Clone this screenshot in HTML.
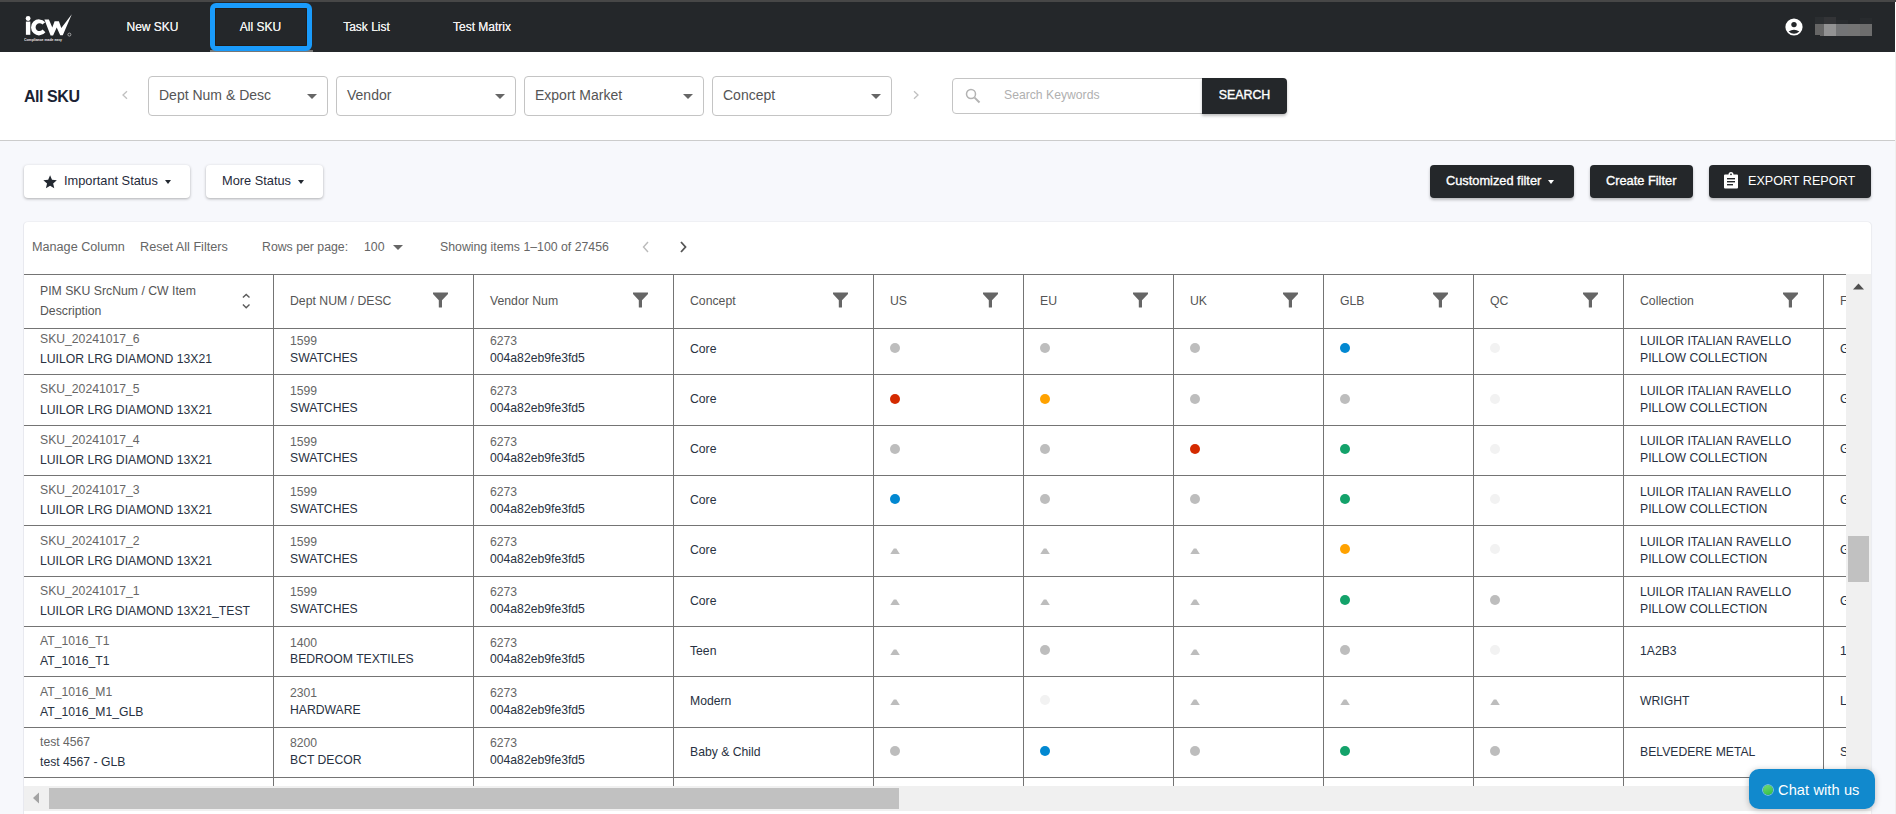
<!DOCTYPE html>
<html><head><meta charset="utf-8">
<style>
*{box-sizing:border-box;margin:0;padding:0}
html,body{width:1896px;height:814px;overflow:hidden;background:#f7f8fc;font-family:"Liberation Sans", sans-serif;}
.a{position:absolute;white-space:nowrap}
.t{position:absolute;white-space:nowrap;line-height:1}
.btnd{position:absolute;background:#24272a;border-radius:4px;box-shadow:0 2px 3px rgba(0,0,0,.25);color:#fff}
.btnw{position:absolute;background:#fff;border-radius:4px;box-shadow:0 1px 3px rgba(0,0,0,.3)}
.dd{position:absolute;top:76px;width:180px;height:40px;border:1px solid #c4c4c4;border-radius:4px;background:#fff}
.dd span{position:absolute;left:10px;top:11.2px;font-size:14px;color:#555;line-height:1}
.caret{position:absolute;width:0;height:0;border-left:5px solid transparent;border-right:5px solid transparent;border-top:5px solid #666}
.hl{position:absolute;height:1px;background:#747474}
.vl{position:absolute;width:1px;background:#747474}
.th{position:absolute;font-size:12.25px;color:#555;line-height:1}
.c1{position:absolute;font-size:12.2px;color:#666;line-height:1}
.c2{position:absolute;font-size:12.2px;color:#283141;line-height:1}
.dot{position:absolute;width:10px;height:10px;border-radius:50%}
</style></head><body>

<div class="a" style="left:0;top:0;width:1896px;height:2px;background:#474747"></div>
<div class="a" style="left:0;top:2px;width:1895px;height:50px;background:#24272a"></div>
<div class="a" style="left:1895px;top:2px;width:1px;height:50px;background:#fff"></div>
<svg class="a" style="left:0;top:0" width="80" height="50" viewBox="0 0 80 50">
<circle cx="28.1" cy="18.5" r="2.4" fill="#fff"/>
<rect x="25.9" y="21.6" width="4.4" height="13.2" fill="#fff"/>
<path d="M45.2 22.3 A8 8 0 1 0 45.4 32.2 L42.6 29.6 A3.9 3.9 0 1 1 42.4 24.6 Z" fill="#fff"/>
<path d="M44.4 19.5 L48.9 19.5 L52.3 27.5 L54.6 21.2 L58.9 21.2 L61.3 28 L71.8 14.2 L62.8 35.3 L60.2 35.3 L56.7 27.4 L53.1 35.6 L50.6 35.6 Z" fill="#fff"/>
<circle cx="69.4" cy="34.6" r="1.5" fill="none" stroke="#ccc" stroke-width=".7"/>
</svg>
<div class="t" style="left:24px;top:37.6px;font-size:4.1px;transform:scaleX(.84);transform-origin:0 0;color:#e6e6e6;font-weight:bold">Compliance made easy</div>
<div class="t" style="left:92.5px;width:120px;text-align:center;top:21px;font-size:12px;color:#eee;text-shadow:0 0 .3px #eee;">New SKU</div>
<div class="t" style="left:200.5px;width:120px;text-align:center;top:21px;font-size:12px;color:#eee;text-shadow:0 0 .3px #eee;">All SKU</div>
<div class="t" style="left:306.5px;width:120px;text-align:center;top:21px;font-size:12px;color:#eee;text-shadow:0 0 .3px #eee;">Task List</div>
<div class="t" style="left:422px;width:120px;text-align:center;top:21px;font-size:12px;color:#eee;text-shadow:0 0 .3px #eee;">Test Matrix</div>
<div class="a" style="left:210px;top:50px;width:103px;height:2px;background:#777"></div>
<div class="a" style="left:210px;top:3px;width:102px;height:48px;border:5px solid #1a9bfb;border-radius:6px"></div>
<div class="a" style="left:215px;top:8px;width:92px;height:38px;border:1px solid #201e1c;border-radius:1px"></div>
<svg class="a" style="left:1785.2px;top:17.8px" width="18" height="18" viewBox="0 0 18 18">
<circle cx="9" cy="9" r="8.6" fill="#fff"/>
<circle cx="9" cy="6.6" r="2.7" fill="#24272a"/>
<path d="M3.6 13.6 Q9 10 14.4 13.6 Q9 18 3.6 13.6Z" fill="#24272a"/>
</svg>
<div class="a" style="left:1815px;top:17px;width:9px;height:7px;background:#2b2e31"></div>
<div class="a" style="left:1824px;top:17px;width:12px;height:7px;background:#333437"></div>
<div class="a" style="left:1836px;top:20px;width:12px;height:4px;background:#282b2e"></div>
<div class="a" style="left:1860px;top:18px;width:12px;height:6px;background:#282b2e"></div>
<div class="a" style="left:1815px;top:24px;width:9px;height:11px;background:#666"></div>
<div class="a" style="left:1820px;top:35px;width:4px;height:1px;background:#666"></div>
<div class="a" style="left:1824px;top:24px;width:12px;height:12px;background:#929293"></div>
<div class="a" style="left:1836px;top:24px;width:12px;height:12px;background:#737476"></div>
<div class="a" style="left:1848px;top:24px;width:12px;height:12px;background:#747474"></div>
<div class="a" style="left:1860px;top:24px;width:12px;height:12px;background:#6d6d6d"></div>
<div class="a" style="left:0;top:52px;width:1896px;height:89px;background:#fff;border-bottom:1px solid #cccccc"></div>
<div class="t" style="left:24px;top:89px;font-size:16px;letter-spacing:-0.45px;font-weight:bold;color:#1a2233">All SKU</div>
<svg class="a" style="left:120px;top:89px" width="10" height="12" viewBox="0 0 10 12"><path d="M7 2.2 L3 6 L7 9.8" fill="none" stroke="#c0c0c0" stroke-width="1.3"/></svg>
<div class="dd" style="left:148px"><span>Dept Num &amp; Desc</span><div class="caret" style="left:158px;top:17px"></div></div>
<div class="dd" style="left:336px"><span>Vendor</span><div class="caret" style="left:158px;top:17px"></div></div>
<div class="dd" style="left:524px"><span>Export Market</span><div class="caret" style="left:158px;top:17px"></div></div>
<div class="dd" style="left:712px"><span>Concept</span><div class="caret" style="left:158px;top:17px"></div></div>
<svg class="a" style="left:911px;top:89px" width="10" height="12" viewBox="0 0 10 12"><path d="M3 2.2 L7 6 L3 9.8" fill="none" stroke="#c0c0c0" stroke-width="1.3"/></svg>
<div class="a" style="left:952px;top:78px;width:252px;height:36px;border:1px solid #c4c4c4;border-radius:4px 0 0 4px;background:#fff"></div>
<svg class="a" style="left:963px;top:86px" width="20" height="20" viewBox="0 0 20 20"><circle cx="8" cy="8" r="4.5" fill="none" stroke="#b3b3b3" stroke-width="1.5"/><path d="M11.6 11.6 L16.5 16.5" stroke="#b3b3b3" stroke-width="2"/></svg>
<div class="t" style="left:1004px;top:89px;font-size:12.2px;color:#b0b0b0">Search Keywords</div>
<div class="btnd" style="left:1202px;top:78px;width:85px;height:36px;border-radius:0 4px 4px 0"><div class="t" style="left:0;width:85px;text-align:center;top:10.6px;font-size:12.4px;-webkit-text-stroke:.35px #fff;color:#fff">SEARCH</div></div>
<div class="btnw" style="left:24px;top:165px;width:166px;height:33px"></div>
<svg class="a" style="left:42.2px;top:173.5px" width="16.2" height="16.2" viewBox="0 0 24 24"><path d="M12 17.27L18.18 21l-1.64-7.03L22 9.24l-7.19-.61L12 2 9.19 8.63 2 9.24l5.46 4.73L5.82 21z" fill="#222830"/></svg>
<div class="t" style="left:64px;top:175px;font-size:12.8px;color:#1f2a3a">Important Status</div>
<div class="caret" style="left:165px;top:180px;border-width:4px 3.5px 0 3.5px;border-top-color:#222830"></div>
<div class="btnw" style="left:206px;top:165px;width:117px;height:33px"></div>
<div class="t" style="left:222px;top:175px;font-size:12.8px;color:#1f2a3a">More Status</div>
<div class="caret" style="left:298px;top:180px;border-width:4px 3.5px 0 3.5px;border-top-color:#222830"></div>
<div class="btnd" style="left:1430px;top:165px;width:144px;height:33px"></div>
<div class="t" style="left:1446px;top:175px;font-size:12.8px;-webkit-text-stroke:.35px #fff;color:#fff">Customized filter</div>
<div class="caret" style="left:1548px;top:180px;border-width:4px 3.5px 0 3.5px;border-top-color:#fff"></div>
<div class="btnd" style="left:1590px;top:165px;width:103px;height:33px"></div>
<div class="t" style="left:1606px;top:175px;font-size:12.8px;-webkit-text-stroke:.35px #fff;color:#fff">Create Filter</div>
<div class="btnd" style="left:1709px;top:165px;width:162px;height:33px"></div>
<svg class="a" style="left:1723px;top:171px" width="16" height="18" viewBox="0 0 16 18"><path d="M2 3.5 H5.5 A2.5 2.5 0 0 1 10.5 3.5 H14 A1 1 0 0 1 15 4.5 V16.5 A1 1 0 0 1 14 17.5 H2 A1 1 0 0 1 1 16.5 V4.5 A1 1 0 0 1 2 3.5Z" fill="#fff"/><circle cx="8" cy="3.3" r="0.9" fill="#24272a"/><rect x="4" y="7" width="8" height="1.4" fill="#24272a"/><rect x="4" y="10" width="8" height="1.4" fill="#24272a"/><rect x="4" y="13" width="6" height="1.4" fill="#24272a"/></svg>
<div class="t" style="left:1748px;top:175px;font-size:12.6px;color:#fff">EXPORT REPORT</div>
<div class="a" style="left:24px;top:222px;width:1847px;height:600px;background:#fff;border-radius:4px;box-shadow:-1px 0 0 #e8e9ef, 0 -1px 1px rgba(0,0,0,.03), 1px 0 1px rgba(0,0,0,.05)"></div>
<div class="t" style="left:32px;top:241px;font-size:12.65px;color:#666">Manage Column</div>
<div class="t" style="left:140px;top:241px;font-size:12.65px;color:#666">Reset All Filters</div>
<div class="t" style="left:262px;top:241px;font-size:12.3px;color:#666">Rows per page:</div>
<div class="t" style="left:364px;top:241px;font-size:12.3px;color:#666">100</div>
<div class="caret" style="left:393px;top:245px;border-top-color:#666"></div>
<div class="t" style="left:440px;top:241px;font-size:12.3px;color:#666">Showing items 1–100 of 27456</div>
<svg class="a" style="left:641px;top:240px" width="10" height="14" viewBox="0 0 10 14"><path d="M7 2 L2.5 7 L7 12" fill="none" stroke="#bbb" stroke-width="1.4"/></svg>
<svg class="a" style="left:678px;top:240px" width="10" height="14" viewBox="0 0 10 14"><path d="M3 2 L7.5 7 L3 12" fill="none" stroke="#555" stroke-width="1.8"/></svg>
<div class="a" style="left:24px;top:274px;width:1822px;height:512px;overflow:hidden;background:#fff">
<div class="c1" style="left:16px;top:59.0px">SKU_20241017_6</div>
<div class="c2" style="left:16px;top:79.19999999999999px">LUILOR LRG DIAMOND 13X21</div>
<div class="c1" style="left:266px;top:61.10000000000002px">1599</div>
<div class="c2" style="left:266px;top:77.89999999999998px">SWATCHES</div>
<div class="c1" style="left:466px;top:61.10000000000002px">6273</div>
<div class="c2" style="left:466px;top:77.89999999999998px">004a82eb9fe3fd5</div>
<div class="c2" style="left:666px;top:68.69999999999999px">Core</div>
<div class="dot" style="left:866px;top:69px;background:#bdbdbd"></div>
<div class="dot" style="left:1016px;top:69px;background:#bdbdbd"></div>
<div class="dot" style="left:1166px;top:69px;background:#bdbdbd"></div>
<div class="dot" style="left:1316px;top:69px;background:#0288d1"></div>
<div class="dot" style="left:1466px;top:69px;background:#f2f2f2"></div>
<div class="c2" style="left:1616px;top:60.69999999999999px">LUILOR ITALIAN RAVELLO</div>
<div class="c2" style="left:1616px;top:77.69999999999999px">PILLOW COLLECTION</div>
<div class="c2" style="left:1816px;top:68.69999999999999px">G</div>
<div class="c1" style="left:16px;top:109.375px">SKU_20241017_5</div>
<div class="c2" style="left:16px;top:129.575px">LUILOR LRG DIAMOND 13X21</div>
<div class="c1" style="left:266px;top:111.34500000000003px">1599</div>
<div class="c2" style="left:266px;top:128.14499999999998px">SWATCHES</div>
<div class="c1" style="left:466px;top:111.34500000000003px">6273</div>
<div class="c2" style="left:466px;top:128.14499999999998px">004a82eb9fe3fd5</div>
<div class="c2" style="left:666px;top:119.07499999999999px">Core</div>
<div class="dot" style="left:866px;top:120px;background:#d42a00"></div>
<div class="dot" style="left:1016px;top:120px;background:#ffa200"></div>
<div class="dot" style="left:1166px;top:120px;background:#bdbdbd"></div>
<div class="dot" style="left:1316px;top:120px;background:#bdbdbd"></div>
<div class="dot" style="left:1466px;top:120px;background:#f2f2f2"></div>
<div class="c2" style="left:1616px;top:110.97499999999997px">LUILOR ITALIAN RAVELLO</div>
<div class="c2" style="left:1616px;top:127.97499999999997px">PILLOW COLLECTION</div>
<div class="c2" style="left:1816px;top:119.07499999999999px">G</div>
<div class="c1" style="left:16px;top:159.75px">SKU_20241017_4</div>
<div class="c2" style="left:16px;top:179.95px">LUILOR LRG DIAMOND 13X21</div>
<div class="c1" style="left:266px;top:161.59000000000003px">1599</div>
<div class="c2" style="left:266px;top:178.39px">SWATCHES</div>
<div class="c1" style="left:466px;top:161.59000000000003px">6273</div>
<div class="c2" style="left:466px;top:178.39px">004a82eb9fe3fd5</div>
<div class="c2" style="left:666px;top:169.45px">Core</div>
<div class="dot" style="left:866px;top:170px;background:#bdbdbd"></div>
<div class="dot" style="left:1016px;top:170px;background:#bdbdbd"></div>
<div class="dot" style="left:1166px;top:170px;background:#d42a00"></div>
<div class="dot" style="left:1316px;top:170px;background:#13a26a"></div>
<div class="dot" style="left:1466px;top:170px;background:#f2f2f2"></div>
<div class="c2" style="left:1616px;top:161.25px">LUILOR ITALIAN RAVELLO</div>
<div class="c2" style="left:1616px;top:178.25px">PILLOW COLLECTION</div>
<div class="c2" style="left:1816px;top:169.45px">G</div>
<div class="c1" style="left:16px;top:210.125px">SKU_20241017_3</div>
<div class="c2" style="left:16px;top:230.325px">LUILOR LRG DIAMOND 13X21</div>
<div class="c1" style="left:266px;top:211.83500000000004px">1599</div>
<div class="c2" style="left:266px;top:228.635px">SWATCHES</div>
<div class="c1" style="left:466px;top:211.83500000000004px">6273</div>
<div class="c2" style="left:466px;top:228.635px">004a82eb9fe3fd5</div>
<div class="c2" style="left:666px;top:219.825px">Core</div>
<div class="dot" style="left:866px;top:220px;background:#0288d1"></div>
<div class="dot" style="left:1016px;top:220px;background:#bdbdbd"></div>
<div class="dot" style="left:1166px;top:220px;background:#bdbdbd"></div>
<div class="dot" style="left:1316px;top:220px;background:#13a26a"></div>
<div class="dot" style="left:1466px;top:220px;background:#f2f2f2"></div>
<div class="c2" style="left:1616px;top:211.52499999999998px">LUILOR ITALIAN RAVELLO</div>
<div class="c2" style="left:1616px;top:228.52499999999998px">PILLOW COLLECTION</div>
<div class="c2" style="left:1816px;top:219.825px">G</div>
<div class="c1" style="left:16px;top:260.5px">SKU_20241017_2</div>
<div class="c2" style="left:16px;top:280.70000000000005px">LUILOR LRG DIAMOND 13X21</div>
<div class="c1" style="left:266px;top:262.08000000000004px">1599</div>
<div class="c2" style="left:266px;top:278.88px">SWATCHES</div>
<div class="c1" style="left:466px;top:262.08000000000004px">6273</div>
<div class="c2" style="left:466px;top:278.88px">004a82eb9fe3fd5</div>
<div class="c2" style="left:666px;top:270.20000000000005px">Core</div>
<svg class="a" style="left:866px;top:273.5px" width="10" height="7" viewBox="0 0 10 7"><path d="M3.8 0.6 L6.3 0.6 L9.8 6.1 L0.3 6.1 Z" fill="#bdbdbd"/></svg>
<svg class="a" style="left:1016px;top:273.5px" width="10" height="7" viewBox="0 0 10 7"><path d="M3.8 0.6 L6.3 0.6 L9.8 6.1 L0.3 6.1 Z" fill="#bdbdbd"/></svg>
<svg class="a" style="left:1166px;top:273.5px" width="10" height="7" viewBox="0 0 10 7"><path d="M3.8 0.6 L6.3 0.6 L9.8 6.1 L0.3 6.1 Z" fill="#bdbdbd"/></svg>
<div class="dot" style="left:1316px;top:270px;background:#ffa200"></div>
<div class="dot" style="left:1466px;top:270px;background:#f2f2f2"></div>
<div class="c2" style="left:1616px;top:261.80000000000007px">LUILOR ITALIAN RAVELLO</div>
<div class="c2" style="left:1616px;top:278.80000000000007px">PILLOW COLLECTION</div>
<div class="c2" style="left:1816px;top:270.20000000000005px">G</div>
<div class="c1" style="left:16px;top:310.875px">SKU_20241017_1</div>
<div class="c2" style="left:16px;top:331.07500000000005px">LUILOR LRG DIAMOND 13X21_TEST</div>
<div class="c1" style="left:266px;top:312.32500000000005px">1599</div>
<div class="c2" style="left:266px;top:329.125px">SWATCHES</div>
<div class="c1" style="left:466px;top:312.32500000000005px">6273</div>
<div class="c2" style="left:466px;top:329.125px">004a82eb9fe3fd5</div>
<div class="c2" style="left:666px;top:320.57500000000005px">Core</div>
<svg class="a" style="left:866px;top:324.5px" width="10" height="7" viewBox="0 0 10 7"><path d="M3.8 0.6 L6.3 0.6 L9.8 6.1 L0.3 6.1 Z" fill="#bdbdbd"/></svg>
<svg class="a" style="left:1016px;top:324.5px" width="10" height="7" viewBox="0 0 10 7"><path d="M3.8 0.6 L6.3 0.6 L9.8 6.1 L0.3 6.1 Z" fill="#bdbdbd"/></svg>
<svg class="a" style="left:1166px;top:324.5px" width="10" height="7" viewBox="0 0 10 7"><path d="M3.8 0.6 L6.3 0.6 L9.8 6.1 L0.3 6.1 Z" fill="#bdbdbd"/></svg>
<div class="dot" style="left:1316px;top:321px;background:#13a26a"></div>
<div class="dot" style="left:1466px;top:321px;background:#bdbdbd"></div>
<div class="c2" style="left:1616px;top:312.07500000000005px">LUILOR ITALIAN RAVELLO</div>
<div class="c2" style="left:1616px;top:329.07500000000005px">PILLOW COLLECTION</div>
<div class="c2" style="left:1816px;top:320.57500000000005px">G</div>
<div class="c1" style="left:16px;top:361.25px">AT_1016_T1</div>
<div class="c2" style="left:16px;top:381.45000000000005px">AT_1016_T1</div>
<div class="c1" style="left:266px;top:362.57000000000005px">1400</div>
<div class="c2" style="left:266px;top:379.37px">BEDROOM TEXTILES</div>
<div class="c1" style="left:466px;top:362.57000000000005px">6273</div>
<div class="c2" style="left:466px;top:379.37px">004a82eb9fe3fd5</div>
<div class="c2" style="left:666px;top:370.95000000000005px">Teen</div>
<svg class="a" style="left:866px;top:374.5px" width="10" height="7" viewBox="0 0 10 7"><path d="M3.8 0.6 L6.3 0.6 L9.8 6.1 L0.3 6.1 Z" fill="#bdbdbd"/></svg>
<div class="dot" style="left:1016px;top:371px;background:#bdbdbd"></div>
<svg class="a" style="left:1166px;top:374.5px" width="10" height="7" viewBox="0 0 10 7"><path d="M3.8 0.6 L6.3 0.6 L9.8 6.1 L0.3 6.1 Z" fill="#bdbdbd"/></svg>
<div class="dot" style="left:1316px;top:371px;background:#bdbdbd"></div>
<div class="dot" style="left:1466px;top:371px;background:#f2f2f2"></div>
<div class="c2" style="left:1616px;top:370.95000000000005px">1A2B3</div>
<div class="c2" style="left:1816px;top:370.95000000000005px">1</div>
<div class="c1" style="left:16px;top:411.625px">AT_1016_M1</div>
<div class="c2" style="left:16px;top:431.82500000000005px">AT_1016_M1_GLB</div>
<div class="c1" style="left:266px;top:412.81500000000005px">2301</div>
<div class="c2" style="left:266px;top:429.615px">HARDWARE</div>
<div class="c1" style="left:466px;top:412.81500000000005px">6273</div>
<div class="c2" style="left:466px;top:429.615px">004a82eb9fe3fd5</div>
<div class="c2" style="left:666px;top:421.32500000000005px">Modern</div>
<svg class="a" style="left:866px;top:424.5px" width="10" height="7" viewBox="0 0 10 7"><path d="M3.8 0.6 L6.3 0.6 L9.8 6.1 L0.3 6.1 Z" fill="#bdbdbd"/></svg>
<div class="dot" style="left:1016px;top:421px;background:#f2f2f2"></div>
<svg class="a" style="left:1166px;top:424.5px" width="10" height="7" viewBox="0 0 10 7"><path d="M3.8 0.6 L6.3 0.6 L9.8 6.1 L0.3 6.1 Z" fill="#bdbdbd"/></svg>
<svg class="a" style="left:1316px;top:424.5px" width="10" height="7" viewBox="0 0 10 7"><path d="M3.8 0.6 L6.3 0.6 L9.8 6.1 L0.3 6.1 Z" fill="#bdbdbd"/></svg>
<svg class="a" style="left:1466px;top:424.5px" width="10" height="7" viewBox="0 0 10 7"><path d="M3.8 0.6 L6.3 0.6 L9.8 6.1 L0.3 6.1 Z" fill="#bdbdbd"/></svg>
<div class="c2" style="left:1616px;top:421.32500000000005px">WRIGHT</div>
<div class="c2" style="left:1816px;top:421.32500000000005px">L</div>
<div class="c1" style="left:16px;top:462.0px">test 4567</div>
<div class="c2" style="left:16px;top:482.20000000000005px">test 4567 - GLB</div>
<div class="c1" style="left:266px;top:463.06000000000006px">8200</div>
<div class="c2" style="left:266px;top:479.86px">BCT DECOR</div>
<div class="c1" style="left:466px;top:463.06000000000006px">6273</div>
<div class="c2" style="left:466px;top:479.86px">004a82eb9fe3fd5</div>
<div class="c2" style="left:666px;top:471.70000000000005px">Baby &amp; Child</div>
<div class="dot" style="left:866px;top:472px;background:#bdbdbd"></div>
<div class="dot" style="left:1016px;top:472px;background:#0288d1"></div>
<div class="dot" style="left:1166px;top:472px;background:#bdbdbd"></div>
<div class="dot" style="left:1316px;top:472px;background:#13a26a"></div>
<div class="dot" style="left:1466px;top:472px;background:#bdbdbd"></div>
<div class="c2" style="left:1616px;top:471.70000000000005px">BELVEDERE METAL</div>
<div class="c2" style="left:1816px;top:471.70000000000005px">S</div>
<div class="hl" style="left:0;top:100px;width:1822px"></div>
<div class="hl" style="left:0;top:151px;width:1822px"></div>
<div class="hl" style="left:0;top:201px;width:1822px"></div>
<div class="hl" style="left:0;top:251px;width:1822px"></div>
<div class="hl" style="left:0;top:302px;width:1822px"></div>
<div class="hl" style="left:0;top:352px;width:1822px"></div>
<div class="hl" style="left:0;top:402px;width:1822px"></div>
<div class="hl" style="left:0;top:453px;width:1822px"></div>
<div class="hl" style="left:0;top:503px;width:1822px"></div>
<div class="a" style="left:0;top:0;width:1822px;height:55px;background:#fff"></div>
<div class="hl" style="left:0;top:0;width:1822px"></div>
<div class="hl" style="left:0;top:54px;width:1822px"></div>
<div class="vl" style="left:249px;top:0;height:512px"></div>
<div class="vl" style="left:449px;top:0;height:512px"></div>
<div class="vl" style="left:649px;top:0;height:512px"></div>
<div class="vl" style="left:849px;top:0;height:512px"></div>
<div class="vl" style="left:999px;top:0;height:512px"></div>
<div class="vl" style="left:1149px;top:0;height:512px"></div>
<div class="vl" style="left:1299px;top:0;height:512px"></div>
<div class="vl" style="left:1449px;top:0;height:512px"></div>
<div class="vl" style="left:1599px;top:0;height:512px"></div>
<div class="vl" style="left:1799px;top:0;height:512px"></div>
<div class="th" style="left:16px;top:11px">PIM SKU SrcNum / CW Item</div>
<div class="th" style="left:16px;top:31px">Description</div>
<svg class="a" style="left:217px;top:19px" width="10" height="16" viewBox="0 0 10 16"><path d="M1.9 4.6 L5.2 1.4 L8.5 4.6 M1.9 11.6 L5.2 14.8 L8.5 11.6" fill="none" stroke="#5a5a5a" stroke-width="1.4"/></svg>
<div class="th" style="left:266px;top:21px">Dept NUM / DESC</div>
<svg class="a" style="left:408px;top:17.5px" width="17" height="17" viewBox="0 0 17 17"><path d="M1 0.6 H16 V1.9 L10 8.3 V14.9 Q10 15.4 9.5 15.4 H7.3 Q6.8 15.4 6.8 14.9 V8.3 L1 1.9 Z" fill="#666"/></svg>
<div class="th" style="left:466px;top:21px">Vendor Num</div>
<svg class="a" style="left:608px;top:17.5px" width="17" height="17" viewBox="0 0 17 17"><path d="M1 0.6 H16 V1.9 L10 8.3 V14.9 Q10 15.4 9.5 15.4 H7.3 Q6.8 15.4 6.8 14.9 V8.3 L1 1.9 Z" fill="#666"/></svg>
<div class="th" style="left:666px;top:21px">Concept</div>
<svg class="a" style="left:808px;top:17.5px" width="17" height="17" viewBox="0 0 17 17"><path d="M1 0.6 H16 V1.9 L10 8.3 V14.9 Q10 15.4 9.5 15.4 H7.3 Q6.8 15.4 6.8 14.9 V8.3 L1 1.9 Z" fill="#666"/></svg>
<div class="th" style="left:866px;top:21px">US</div>
<svg class="a" style="left:958px;top:17.5px" width="17" height="17" viewBox="0 0 17 17"><path d="M1 0.6 H16 V1.9 L10 8.3 V14.9 Q10 15.4 9.5 15.4 H7.3 Q6.8 15.4 6.8 14.9 V8.3 L1 1.9 Z" fill="#666"/></svg>
<div class="th" style="left:1016px;top:21px">EU</div>
<svg class="a" style="left:1108px;top:17.5px" width="17" height="17" viewBox="0 0 17 17"><path d="M1 0.6 H16 V1.9 L10 8.3 V14.9 Q10 15.4 9.5 15.4 H7.3 Q6.8 15.4 6.8 14.9 V8.3 L1 1.9 Z" fill="#666"/></svg>
<div class="th" style="left:1166px;top:21px">UK</div>
<svg class="a" style="left:1258px;top:17.5px" width="17" height="17" viewBox="0 0 17 17"><path d="M1 0.6 H16 V1.9 L10 8.3 V14.9 Q10 15.4 9.5 15.4 H7.3 Q6.8 15.4 6.8 14.9 V8.3 L1 1.9 Z" fill="#666"/></svg>
<div class="th" style="left:1316px;top:21px">GLB</div>
<svg class="a" style="left:1408px;top:17.5px" width="17" height="17" viewBox="0 0 17 17"><path d="M1 0.6 H16 V1.9 L10 8.3 V14.9 Q10 15.4 9.5 15.4 H7.3 Q6.8 15.4 6.8 14.9 V8.3 L1 1.9 Z" fill="#666"/></svg>
<div class="th" style="left:1466px;top:21px">QC</div>
<svg class="a" style="left:1558px;top:17.5px" width="17" height="17" viewBox="0 0 17 17"><path d="M1 0.6 H16 V1.9 L10 8.3 V14.9 Q10 15.4 9.5 15.4 H7.3 Q6.8 15.4 6.8 14.9 V8.3 L1 1.9 Z" fill="#666"/></svg>
<div class="th" style="left:1616px;top:21px">Collection</div>
<svg class="a" style="left:1758px;top:17.5px" width="17" height="17" viewBox="0 0 17 17"><path d="M1 0.6 H16 V1.9 L10 8.3 V14.9 Q10 15.4 9.5 15.4 H7.3 Q6.8 15.4 6.8 14.9 V8.3 L1 1.9 Z" fill="#666"/></svg>
<div class="th" style="left:1816px;top:21px">F</div>
</div>
<div class="a" style="left:1846px;top:274px;width:25px;height:537px;background:#f0f0f0"></div>
<svg class="a" style="left:1852px;top:283px" width="13" height="8" viewBox="0 0 13 8"><path d="M6.5 0.5 L12 6.5 H1 Z" fill="#505050"/></svg>
<div class="a" style="left:1848px;top:536px;width:21px;height:46px;background:#c1c1c1"></div>
<div class="a" style="left:24px;top:786px;width:1822px;height:25px;background:#f0f0f0"></div>
<svg class="a" style="left:32px;top:791px" width="10" height="14" viewBox="0 0 10 14"><path d="M1 7 L7 1.5 V12.5 Z" fill="#a3a3a3"/></svg>
<div class="a" style="left:49px;top:788px;width:850px;height:21px;background:#c1c1c1"></div>
<div class="a" style="left:1749px;top:769px;width:126px;height:40px;border-radius:10px;background:#1189cd;box-shadow:0 1px 6px rgba(0,0,0,.25)"></div>
<div class="dot" style="left:1763px;top:785px;background:linear-gradient(160deg,#74d874,#2fbf45);box-shadow:0 0 0 .8px rgba(255,255,255,.55)"></div>
<div class="t" style="left:1778px;top:783px;font-size:14.6px;letter-spacing:.1px;color:#fff">Chat with us</div>
<div class="a" style="left:1895px;top:52px;width:1px;height:762px;background:#efefef"></div>
</body></html>
